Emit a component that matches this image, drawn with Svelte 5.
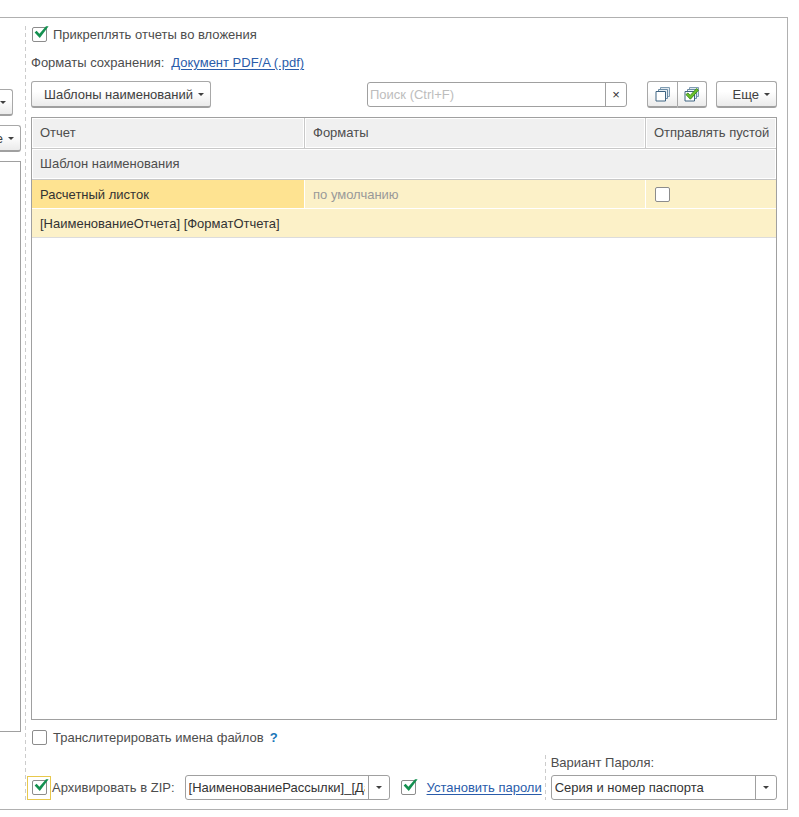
<script>
  let attachReports = $state(true);
  let transliterate = $state(false);
  let archive = $state(true);
  let usePasswords = $state(true);

  let search = $state('');
  let zipTemplate = $state('[НаименованиеРассылки]_[ДатаВыполнения]');
  let passwordKind = $state('Серия и номер паспорта');

  let reports = $state([
    {
      name: 'Расчетный листок',
      formats: 'по умолчанию',
      sendEmpty: false,
      template: '[НаименованиеОтчета] [ФорматОтчета]'
    }
  ]);

  const setAll = (value) => {
    for (const report of reports) report.sendEmpty = value;
  };
</script>

{#snippet arrow()}
  <svg class="arrow" viewBox="0 0 6 3" aria-hidden="true"><path d="M0 0h6L3 3z" /></svg>
{/snippet}

{#snippet tick()}
  <svg class="tick" viewBox="0 0 16 16" aria-hidden="true">
    <path d="M1.6 7.4 3.6 5.8 6.4 8.8 13 1.2H15.6L6.8 13z" />
  </svg>
{/snippet}

{#snippet sheets()}
  <path class="back" d="M5.5 1.5h9v9h-9z" />
  <path class="mid" d="M3.5 3.5h9v9h-9z" />
  <path class="front" d="M1 5.5h9.5v9.5H1z" />
{/snippet}

<main class="frame">
  <aside class="side">
    <button class="btn side-first" type="button" aria-label="Меню">{@render arrow()}</button>
    <button class="btn side-more" type="button">Еще {@render arrow()}</button>
    <div class="side-list"></div>
  </aside>

  <section class="content">
    <label class="line">
      <span class="check">
        <input type="checkbox" bind:checked={attachReports} />
        {#if attachReports}{@render tick()}{/if}
      </span>
      Прикреплять отчеты во вложения
    </label>

    <div class="line formats">
      <span>Форматы сохранения:</span>
      <a href="#formats">Документ PDF/A (.pdf)</a>
    </div>

    <div class="toolbar">
      <button class="btn templates" type="button">Шаблоны наименований {@render arrow()}</button>
      <div class="field search">
        <input type="text" placeholder="Поиск (Ctrl+F)" aria-label="Поиск" bind:value={search} />
        <button type="button" aria-label="Очистить" onclick={() => (search = '')}>×</button>
      </div>
      <div class="pair">
        <button class="btn" type="button" aria-label="Снять флажки" onclick={() => setAll(false)}>
          <svg class="sheets" viewBox="0 0 16 16" aria-hidden="true">
            {@render sheets()}
          </svg>
        </button>
        <button class="btn" type="button" aria-label="Установить флажки" onclick={() => setAll(true)}>
          <svg class="sheets" viewBox="0 0 16 16" aria-hidden="true">
            {@render sheets()}
            <path class="mark" d="M2 8.6 3.8 7 6.2 9.4 12.6 2.6 14.4 4.2 6.4 13.2z" />
          </svg>
        </button>
      </div>
      <button class="btn more" type="button">Еще {@render arrow()}</button>
    </div>

    <div class="grid">
      <table>
        <colgroup>
          <col class="col-report" />
          <col />
          <col class="col-empty" />
        </colgroup>
        <thead>
          <tr>
            <th>Отчет</th>
            <th>Форматы</th>
            <th>Отправлять пустой</th>
          </tr>
          <tr>
            <th colspan="3">Шаблон наименования</th>
          </tr>
        </thead>
        <tbody>
          {#each reports as report}
            <tr>
              <td class="current">{report.name}</td>
              <td class="muted">{report.formats}</td>
              <td>
                <span class="check">
                  <input type="checkbox" aria-label="Отправлять пустой" bind:checked={report.sendEmpty} />
                  {#if report.sendEmpty}{@render tick()}{/if}
                </span>
              </td>
            </tr>
            <tr class="last">
              <td colspan="3">{report.template}</td>
            </tr>
          {/each}
        </tbody>
      </table>
    </div>

    <div class="line translit">
      <label class="line">
        <span class="check">
          <input type="checkbox" bind:checked={transliterate} />
          {#if transliterate}{@render tick()}{/if}
        </span>
        Транслитерировать имена файлов
      </label>
      <a class="help" href="#help">?</a>
    </div>

    <div class="bottom">
      <label class="line archive">
        <span class="check focused">
          <input type="checkbox" bind:checked={archive} />
          {#if archive}{@render tick()}{/if}
        </span>
        Архивировать в ZIP:
      </label>
      <div class="field zip">
        <input type="text" aria-label="Имя архива" bind:value={zipTemplate} />
        <button type="button" aria-label="Выбрать">{@render arrow()}</button>
      </div>
      <div class="line passwords">
        <span class="check">
          <input type="checkbox" aria-label="Установить пароли" bind:checked={usePasswords} />
          {#if usePasswords}{@render tick()}{/if}
        </span>
        <a href="#passwords">Установить пароли</a>
      </div>
      <div class="variant">
        <label for="password-kind">Вариант Пароля:</label>
        <div class="field">
          <select id="password-kind" bind:value={passwordKind}>
            <option>Серия и номер паспорта</option>
            <option>Дата рождения</option>
          </select>
          <span class="drop">{@render arrow()}</span>
        </div>
      </div>
    </div>
  </section>
</main>

<style>
  :global(body) {
    margin: 0;
    background: #fff;
  }

  .frame,
  .frame * {
    box-sizing: border-box;
  }

  .frame {
    display: flex;
    min-height: calc(100vh - 24px);
    margin: 17px 11px 7px 0;
    border: 1px solid #b0b0b0;
    border-left: 0;
    font: 13px/16px 'Liberation Sans', Arial, sans-serif;
    color: #4d4d4d;
  }

  input,
  select,
  button {
    margin: 0;
    font: inherit;
    color: inherit;
  }

  a {
    color: #2a5caa;
    text-decoration: underline;
    text-underline-offset: 2px;
  }

  /* left column, cut by the window edge */
  .side {
    display: flex;
    flex-direction: column;
    align-items: flex-end;
    width: 21px;
    padding: 71px 0 77px;
    overflow: hidden;
  }

  .side-first {
    width: 40px;
    margin-right: 8px;
  }

  .side-more {
    margin: 9px 0;
  }

  .side-list {
    flex: 1;
    width: 60px;
    border: 1px solid #a0a0a0;
  }

  .content {
    display: flex;
    flex: 1;
    flex-direction: column;
    min-width: 0;
    margin: 8px 0 9px 4px;
    padding: 1px 10px 0 6px;
    background: repeating-linear-gradient(#ccc 0 4px, transparent 4px 7px) left top / 1px 100% no-repeat;
  }

  .line {
    display: flex;
    align-items: center;
    gap: 6px;
    height: 16px;
    white-space: nowrap;
  }

  .formats {
    gap: 7px;
    margin-top: 12px;
  }

  .check {
    position: relative;
    display: block;
    width: 16px;
    height: 16px;
    padding-left: 1px;
  }

  .check input {
    display: block;
    width: 15px;
    height: 15px;
    appearance: none;
    border: 1px solid #8c8c8c;
    border-radius: 2px;
    background: #fff;
  }

  .tick {
    position: absolute;
    top: -2px;
    left: 2px;
    width: 16px;
    height: 16px;
    fill: #149050;
    pointer-events: none;
  }

  .focused {
    outline: 1px solid #e8c84c;
    outline-offset: 3px;
  }

  .btn {
    display: flex;
    align-items: center;
    justify-content: flex-end;
    gap: 5px;
    height: 27px;
    padding: 1px 6px 0 12px;
    border: 1px solid #a8a8a8;
    border-bottom: 2px solid #a0a0a0;
    border-radius: 3px;
    background: linear-gradient(#fff 40%, #ebebeb);
    color: #404040;
    white-space: nowrap;
  }

  .arrow {
    display: block;
    width: 6px;
    height: 3px;
    fill: #404040;
  }

  .toolbar {
    display: flex;
    align-items: center;
    margin-top: 10px;
  }

  .field {
    position: relative;
    display: flex;
    height: 25px;
    border: 1px solid #a0a0a0;
    border-radius: 3px;
    background: #fff;
    color: #333;
  }

  .field input,
  .field select {
    flex: 1;
    width: 100%;
    min-width: 0;
    padding: 0 3px;
    appearance: none;
    border: 0;
    outline: 0;
    background: none;
  }

  .field button,
  .drop {
    display: flex;
    flex: none;
    align-items: center;
    justify-content: center;
    width: 21px;
    padding: 0;
    border: 0;
    border-left: 1px solid #a0a0a0;
    background: none;
  }

  .search {
    width: 260px;
    margin: 0 20px 0 auto;
  }

  .search input {
    padding: 0 2px;
  }

  .search input::placeholder {
    color: #bdbdbd;
  }

  .pair {
    display: flex;
    margin-right: 9px;
  }

  .pair .btn {
    justify-content: center;
    width: 30px;
    padding: 0;
  }

  .pair .btn:first-child {
    width: 31px;
    border-radius: 3px 0 0 3px;
  }

  .pair .btn:last-child {
    width: 29px;
    border-left: 0;
    border-radius: 0 3px 3px 0;
  }

  .more {
    width: 61px;
  }

  .sheets {
    width: 16px;
    height: 16px;
    fill: #fff;
  }

  .back {
    fill: #dfe8ef;
    stroke: #7f9cb2;
  }

  .mid {
    fill: #e8eff4;
    stroke: #6b8ba4;
  }

  .front {
    stroke: #3f6482;
  }

  .mark {
    fill: #6cc42a;
    stroke: #3c8c1e;
  }

  .grid {
    flex: 1;
    margin-top: 9px;
    border: 1px solid #a0a0a0;
  }

  table {
    width: 100%;
    table-layout: fixed;
    border-spacing: 0;
  }

  .col-report {
    width: 273px;
  }

  .col-empty {
    width: 130px;
  }

  th,
  td {
    height: 29px;
    padding: 2px 8px 0;
    border-right: 1px solid #fff;
    border-bottom: 1px solid #fff;
    background: #fcf1c8;
    color: #333;
    font-weight: normal;
    text-align: left;
    white-space: nowrap;
  }

  th {
    height: 31px;
    padding-top: 0;
    border-right-color: #c8c8c8;
    border-bottom-color: #c8c8c8;
    background: #f0f0f0;
    box-shadow: inset 0 0 0 1px #fff;
    color: #4d4d4d;
  }

  th:last-child {
    border-right: 0;
  }

  td:last-child {
    border-right: 0;
  }

  .last td {
    border-bottom-color: #dcdcdc;
  }

  td.current {
    background: #fee391;
  }

  td.muted {
    color: #999;
  }

  .translit {
    gap: 6px;
    margin-top: 10px;
  }

  .help {
    color: #1a76b8;
    font-weight: bold;
    text-decoration: none;
  }

  .bottom {
    display: flex;
    align-items: flex-end;
    margin-top: 9px;
  }

  .archive,
  .passwords {
    height: 24px;
  }

  .archive {
    gap: 5px;
  }

  .zip {
    width: 205px;
    margin: 0 10px;
  }

  .passwords {
    gap: 11px;
  }

  .variant {
    flex: 1;
    margin-left: 3px;
    padding-left: 6px;
    background: repeating-linear-gradient(#ccc 0 4px, transparent 4px 7px) left top / 1px 100% no-repeat;
  }

  .variant label {
    display: block;
    margin-bottom: 4px;
  }

  .variant .drop {
    pointer-events: none;
  }
</style>
